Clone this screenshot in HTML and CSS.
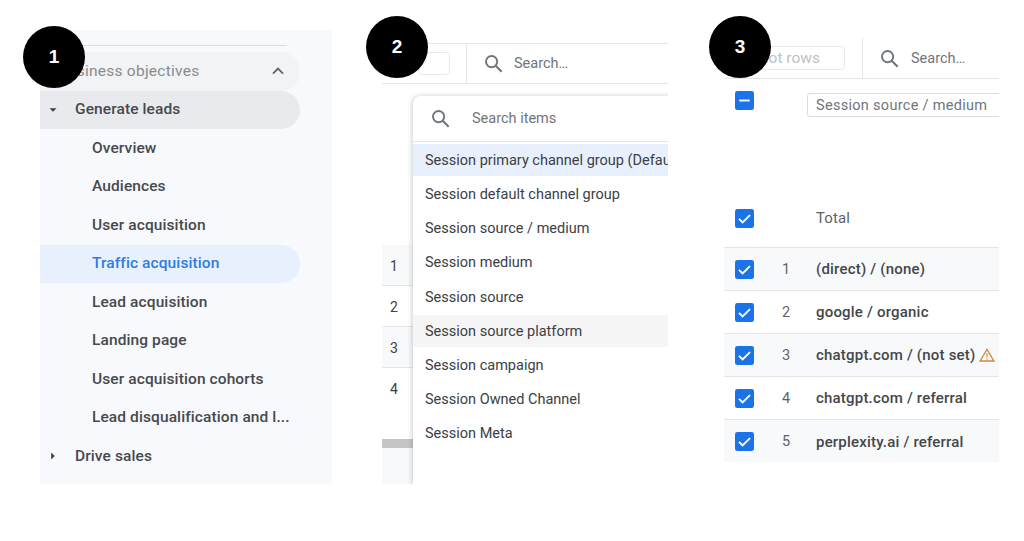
FILE: index.html
```html
<!DOCTYPE html>
<html lang="en">
<head>
<meta charset="utf-8">
<title>Traffic acquisition steps</title>
<link rel="stylesheet" href="styles.css">
</head>
<body>
<svg class="sprite" width="0" height="0" aria-hidden="true">
  <symbol id="search" viewBox="0 0 20 20"><circle cx="8" cy="8" r="5.9" fill="none" stroke="currentColor" stroke-width="2"/><path d="M12.3 12.3 18.6 18.6" fill="none" stroke="currentColor" stroke-width="2.2"/></symbol>
  <symbol id="check" viewBox="0 0 20 20"><rect width="20" height="20" rx="2.5" fill="#1a73e8"/><path d="M4.2 10.4 8 14.2 15.8 6.4" fill="none" stroke="#fff" stroke-width="2"/></symbol>
</svg>
<main class="canvas">
  <section class="panel nav">
    <div class="nav-rule"></div>
    <div class="nav-row section"><span class="nav-label">Business objectives</span>
      <svg class="chevron" viewBox="0 0 12 8"><path d="M1 6.6 6 1.6 11 6.6" fill="none" stroke="currentColor" stroke-width="1.8"/></svg>
    </div>
    <div class="nav-row group open"><svg class="caret" viewBox="0 0 8 8"><path d="M0.5 2.2H7.5L4 5.8Z"/></svg><span>Generate leads</span></div>
    <div class="nav-row item"><span>Overview</span></div>
    <div class="nav-row item"><span>Audiences</span></div>
    <div class="nav-row item"><span>User acquisition</span></div>
    <div class="nav-row item active"><span>Traffic acquisition</span></div>
    <div class="nav-row item"><span>Lead acquisition</span></div>
    <div class="nav-row item"><span>Landing page</span></div>
    <div class="nav-row item"><span>User acquisition cohorts</span></div>
    <div class="nav-row item"><span>Lead disqualification and l...</span></div>
    <div class="nav-row group"><svg class="caret" viewBox="0 0 8 8"><path d="M2.2 0.5V7.5L5.8 4Z"/></svg><span>Drive sales</span></div>
  </section>

  <section class="panel dims">
    <div class="toolbar dims-bar">
      <div class="tool-left"><span class="tool-btn"></span></div>
      <div class="tool-search"><svg class="icon-search"><use href="#search"/></svg><span>Search…</span></div>
    </div>
    <div class="dims-body">
      <div class="index-col">
        <div class="index-gap"></div>
        <div class="index-row tinted">1</div>
        <div class="index-row">2</div>
        <div class="index-row tinted">3</div>
        <div class="index-row last">4</div>
        <div class="scrollbar"></div>
        <div class="index-end"></div>
      </div>
      <div class="menu">
        <div class="menu-search"><svg class="icon-search"><use href="#search"/></svg><span>Search items</span></div>
        <ul class="menu-list">
          <li class="selected">Session primary channel group (Default channel group)</li>
          <li>Session default channel group</li>
          <li>Session source / medium</li>
          <li>Session medium</li>
          <li>Session source</li>
          <li class="hover">Session source platform</li>
          <li>Session campaign</li>
          <li>Session Owned Channel</li>
          <li>Session Meta</li>
        </ul>
      </div>
    </div>
  </section>

  <section class="panel table">
    <div class="toolbar table-bar">
      <div class="tool-left"><span class="plot-btn">Plot rows</span></div>
      <div class="tool-search"><svg class="icon-search"><use href="#search"/></svg><span>Search…</span></div>
    </div>
    <div class="table-head">
      <div class="head-top">
        <svg class="box" viewBox="0 0 20 20"><rect width="20" height="20" rx="2.5" fill="#1a73e8"/><path d="M4.5 10H15.5" stroke="#fff" stroke-width="2"/></svg>
        <div class="select">Session source / medium</div>
      </div>
      <div class="head-total">
        <svg class="box"><use href="#check"/></svg>
        <span class="total">Total</span>
      </div>
    </div>
    <div class="t-row tinted"><svg class="box"><use href="#check"/></svg><span class="num">1</span><span class="src">(direct) / (none)</span></div>
    <div class="t-row"><svg class="box"><use href="#check"/></svg><span class="num">2</span><span class="src">google / organic</span></div>
    <div class="t-row tinted"><svg class="box"><use href="#check"/></svg><span class="num">3</span><span class="src">chatgpt.com / (not set)</span>
      <svg class="warn" viewBox="0 0 16 14"><path d="M8 1.4 14.9 13H1.1Z" fill="none" stroke="#d08a3c" stroke-width="1.3"/><path d="M8 5.2V9.2M8 10.2V11.6" stroke="#d08a3c" stroke-width="1.2"/></svg>
    </div>
    <div class="t-row"><svg class="box"><use href="#check"/></svg><span class="num">4</span><span class="src">chatgpt.com / referral</span></div>
    <div class="t-row tinted"><svg class="box"><use href="#check"/></svg><span class="num">5</span><span class="src">perplexity.ai / referral</span></div>
  </section>

  <div class="badge badge-1">1</div>
  <div class="badge badge-2">2</div>
  <div class="badge badge-3">3</div>
</main>
</body>
</html>
```
FILE: styles.css
```css
* { box-sizing: border-box; }
html, body { margin: 0; background: #fff; }
body { font-family: Roboto, "Liberation Sans", sans-serif; color: #3c4043; overflow: hidden; }
.sprite { position: absolute; }
.canvas { position: relative; width: 1024px; height: 541px; display: flex; align-items: flex-start; padding-left: 40px; }
.panel { flex: none; overflow: hidden; }

/* Panel 1: navigation */
.nav { width: 292px; height: 454px; margin-top: 30px; background: #f7f9fc; padding-top: 15px; font-size: 15.5px; font-weight: 500; letter-spacing: 0.1px; }
.nav-rule { width: 247px; height: 1px; background: #dadce0; margin-bottom: 6px; }
.nav-row { width: 260px; height: 38.5px; display: flex; align-items: center; border-radius: 0 20px 20px 0; white-space: nowrap; color: #47494d; }
.nav-row span { padding-bottom: 1px; }
.section { background: #f1f3f4; justify-content: space-between; padding-left: 18px; padding-right: 16px; }
.section .nav-label { color: #888c91; font-weight: 400; letter-spacing: 0.25px; }
.chevron { width: 12px; height: 8px; color: #5f6368; }
.group { padding-left: 9px; }
.open { background: #e8eaed; }
.caret { width: 8px; height: 8px; margin-right: 18px; fill: #3c4043; }
.item { padding-left: 52px; }
.active { background: #e8f0fe; color: #2f7de1; }

/* Toolbars */
.toolbar { display: flex; height: 41px; border-bottom: 1px solid #e3e5e8; }
.tool-left { display: flex; align-items: center; justify-content: flex-end; border-right: 1px solid #e3e5e8; }
.tool-search { display: flex; align-items: center; gap: 11px; color: #70757a; font-size: 14.5px; }
.icon-search { width: 19px; height: 19px; color: #70757a; flex: none; }

/* Panel 2: dimension menu */
.dims { width: 286px; height: 441px; margin-left: 50px; margin-top: 43px; }
.dims-bar { border-top: 1px solid #e3e5e8; }
.dims-bar .tool-left { width: 85px; padding-right: 16px; }
.dims-bar .tool-search { padding-left: 17px; }
.tool-btn { width: 32px; height: 23px; border: 1px solid #e8eaed; border-radius: 4px; }
.dims-body { display: flex; height: 400px; }
.index-col { width: 31px; flex: none; font-size: 14px; color: #3c4043; }
.index-gap { height: 161px; }
.index-row { height: 41px; padding: 13px 0 0 8px; border-bottom: 1px solid #e3e5e8; }
.index-row.tinted { background: #f8f9fa; }
.index-row.last { height: 71px; border-bottom: 0; }
.scrollbar { height: 9px; background: #c4c5c7; }
.index-end { height: 36px; background: #f8f9fa; }
.menu { flex: 1; margin-top: 12px; background: #fff; border-radius: 8px 0 0 0; box-shadow: -1px 0 5px rgba(60, 64, 67, 0.25); font-size: 14.5px; }
.menu-search { height: 46px; display: flex; align-items: center; gap: 22px; padding-left: 18px; border-bottom: 1px solid #e3e5e8; color: #70757a; }
.menu-list { list-style: none; margin: 2px 0 0; padding: 0; display: flex; flex-direction: column; gap: 2.15px; }
.menu-list li { height: 32px; line-height: 33px; padding-left: 12px; white-space: nowrap; overflow: hidden; color: #3c4043; }
.menu-list .selected { background: #e8f0fe; }
.menu-list .hover { background: #f5f5f5; }

/* Panel 3: table */
.table { width: 275px; height: 424px; margin-left: 56px; margin-top: 38px; }
.table-bar .tool-left { width: 139px; padding-right: 17px; }
.table-bar .tool-search { padding-left: 17px; gap: 12px; }
.plot-btn { width: 100px; height: 24px; border: 1px solid #e8eaed; border-radius: 4px; color: #bdc1c6; font-size: 15.5px; line-height: 22px; padding-left: 9px; white-space: nowrap; }
.table-head { height: 169px; border-bottom: 1px solid #e3e5e8; padding-left: 11px; }
.box { width: 19px; height: 19px; flex: none; }
.head-top { display: flex; align-items: flex-start; padding-top: 12px; height: 129px; }
.select { width: 215px; flex: none; height: 24px; margin: 2px 0 0 53px; border: 1px solid #dadce0; border-radius: 3px; padding-left: 8px; line-height: 24px; font-size: 14.5px; color: #70757a; letter-spacing: 0.3px; white-space: nowrap; }
.head-total { display: flex; align-items: center; height: 20px; }
.total { margin-left: 62px; font-size: 15px; color: #5f6368; letter-spacing: 0.1px; }
.t-row { height: 43px; display: flex; align-items: center; padding-left: 11px; border-bottom: 1px solid #e3e5e8; font-size: 15px; }
.t-row:last-child { border-bottom: 0; }
.t-row.tinted { background: #f8f9fa; }
.num { width: 62px; padding-left: 28px; flex: none; color: #5f6368; font-size: 14.5px; }
.src { font-weight: 500; color: #44474a; white-space: nowrap; letter-spacing: 0.2px; }
.warn { width: 16px; height: 14px; margin-left: 4px; flex: none; }

/* Step badges */
.badge { position: absolute; width: 62px; height: 62px; border-radius: 50%; background: #000; color: #fff; font: 700 19px/62px "Liberation Sans", Arial, sans-serif; text-align: center; }
.badge-1 { left: 23px; top: 26px; }
.badge-2 { left: 366px; top: 16px; }
.badge-3 { left: 709px; top: 16px; }
```
